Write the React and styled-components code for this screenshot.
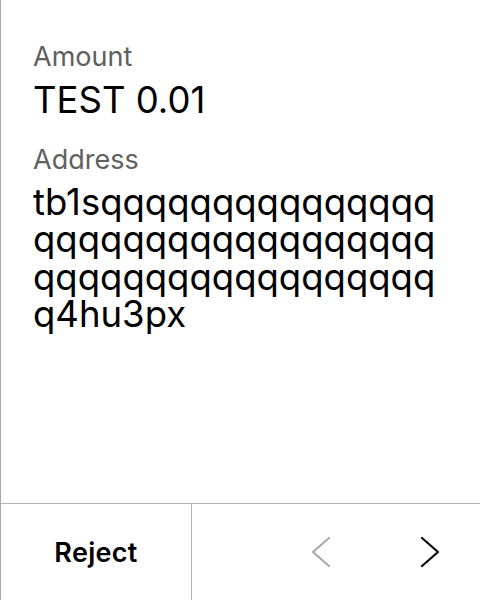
import React from 'react';
import styled, {createGlobalStyle} from 'styled-components';

const GlobalStyle = createGlobalStyle`
  html, body {
    margin: 0;
    padding: 0;
    background: #fff;
  }
  body {
    font-family: Inter, "Noto Sans", sans-serif;
    color: #000;
  }
`;

const Screen = styled.div`
  width: 480px;
  height: 600px;
  box-sizing: border-box;
  border-left: 1px solid #a8a8a8;
  display: flex;
  flex-direction: column;
`;

const Body = styled.div`
  flex: 1;
  padding: 41px 32px 0 32px;
  display: flex;
  flex-direction: column;
`;

const Label = styled.div`
  font-size: 27px;
  line-height: 32px;
  color: #606060;
  margin-top: ${p => p.$gap || 0}px;
`;

const Value = styled.div`
  font-size: 36.5px;
  line-height: ${p => p.$lh || 37.5}px;
  color: #000;
  margin-top: ${p => p.$mt || 8}px;
  word-break: break-all;
  width: ${p => p.$width || 'auto'};
`;

const Footer = styled.div`
  height: 96px;
  border-top: 1px solid #b4b4b4;
  display: flex;
`;

const RejectCell = styled.button`
  width: 191px;
  border: 0;
  border-right: 1px solid #b4b4b4;
  background: none;
  font-family: Inter, "Noto Sans", sans-serif;
  font-weight: 600;
  font-size: 27px;
  letter-spacing: 0.3px;
  color: #000;
  padding: 0;
`;

const NavCell = styled.div`
  flex: 1;
  display: flex;
  justify-content: flex-end;
  align-items: center;
  gap: 77px;
  padding-right: 34px;
`;

const NavButton = styled.button`
  width: 32px;
  height: 40px;
  border: 0;
  background: none;
  padding: 0;
  display: flex;
  align-items: center;
  justify-content: center;
  color: ${p => (p.disabled ? '#a8a8a8' : '#000')};
`;

const Chevron = ({dir}) => (
  <svg width="20" height="32" viewBox="0 0 20 32" fill="none">
    <path
      d={dir === 'left' ? 'M18 2 L2 16 L18 30' : 'M2 2 L18 16 L2 30'}
      stroke="currentColor"
      strokeWidth="2.2"
      strokeLinecap="round"
      strokeLinejoin="round"
    />
  </svg>
);

export default function App() {
  const address = 'tb1s' + 'q'.repeat(52) + '4hu3px';

  return (
    <>
      <GlobalStyle />
      <Screen>
        <Body>
          <Label>Amount</Label>
          <Value $lh={38}>TEST 0.01</Value>
          <Label $gap={25}>Address</Label>
          <Value $width="404px" $mt={7.5}>{address}</Value>
        </Body>
        <Footer>
          <RejectCell>Reject</RejectCell>
          <NavCell>
            <NavButton disabled>
              <Chevron dir="left" />
            </NavButton>
            <NavButton>
              <Chevron dir="right" />
            </NavButton>
          </NavCell>
        </Footer>
      </Screen>
    </>
  );
}
